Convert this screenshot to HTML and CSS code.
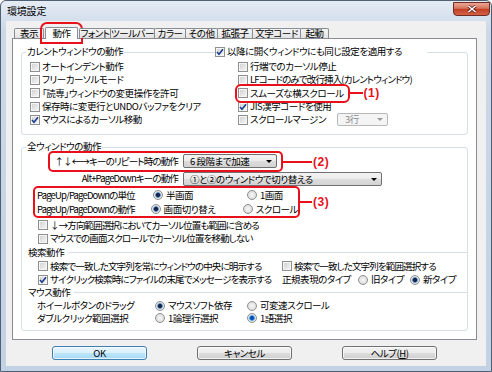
FILE: index.html
```html
<!DOCTYPE html>
<html lang="ja">
<head>
    <meta charset="UTF-8">
    <title>環境設定</title>
    <link rel="stylesheet" href="styles.css">
</head>
<body>

<div class="window">
    <div class="titlebar">
        <span class="title">環境設定</span>
        <span class="close">
            <svg width="10" height="8" viewBox="0 0 10 8"><path d="M1.5 1 L8.5 7 M8.5 1 L1.5 7" stroke="#5a1a10" stroke-width="3"/><path d="M1.5 1 L8.5 7 M8.5 1 L1.5 7" stroke="#fff" stroke-width="1.6"/></svg>
        </span>
    </div>

    <div class="client">
        <div class="tabs">
            <span class="tab t1">表示</span>
            <span class="tab active t2">動作</span>
            <span class="tab t3">フォント</span>
            <span class="tab t4">ツールバー</span>
            <span class="tab t5">カラー</span>
            <span class="tab t6">その他</span>
            <span class="tab t7">拡張子</span>
            <span class="tab t8">文字コード</span>
            <span class="tab t9">起動</span>
        </div>

        <div class="panel">
            <!-- カレントウィンドウ -->
            <div class="group g1">
                <div class="group-head">
                    <span class="caption">カレントウィンドウの動作</span>
                    <label class="check head-check"><i class="box"><svg width="8" height="8" viewBox="0 0 8 8"><path d="M1 4 L3 6.3 L7 1.2" fill="none" stroke="#1d3f91" stroke-width="1.6"/></svg></i><span>以降に開くウィンドウにも同じ設定を適用する</span></label>
                </div>
                <div class="rows">
                    <label class="check"><i class="box"></i><span>オートインデント動作</span></label>
                    <label class="check"><i class="box"></i><span>行端でのカーソル停止</span></label>
                    <label class="check"><i class="box"></i><span>フリーカーソルモード</span></label>
                    <label class="check"><i class="box"></i><span class="tight">LFコードのみで改行挿入(カレントウィンドウ)</span></label>
                    <label class="check"><i class="box"></i><span>「読専」ウィンドウの変更操作を許可</span></label>
                    <div class="cell">
                        <label class="check mark m1"><i class="box"></i><span>スムーズな横スクロール</span><span class="callout c1">(1)</span></label>
                    </div>
                    <label class="check"><i class="box"></i><span>保存時に変更行とUNDOバッファをクリア</span></label>
                    <label class="check"><i class="box"><svg width="8" height="8" viewBox="0 0 8 8"><path d="M1 4 L3 6.3 L7 1.2" fill="none" stroke="#1d3f91" stroke-width="1.6"/></svg></i><span>JIS漢字コードを使用</span></label>
                    <label class="check"><i class="box"><svg width="8" height="8" viewBox="0 0 8 8"><path d="M1 4 L3 6.3 L7 1.2" fill="none" stroke="#1d3f91" stroke-width="1.6"/></svg></i><span>マウスによるカーソル移動</span></label>
                    <div class="cell">
                        <label class="check margin-check"><i class="box"></i><span>スクロールマージン</span></label>
                        <span class="combo off small"><span>3行</span><svg width="6" height="3" viewBox="0 0 6 3"><path d="M0 0h6l-3 3z" fill="#9a9a9a"/></svg></span>
                    </div>
                </div>
            </div>

            <!-- 全ウィンドウ -->
            <div class="group g2">
                <div class="group-head">
                    <span class="caption">全ウィンドウの動作</span>
                </div>

                <div class="combo-row first">
                    <div class="mark m2">
                        <span class="tight">↑↓←→キーのリピート時の動作</span>
                        <span class="combo repeat"><span>6 段階まで加速</span><svg width="6" height="3" viewBox="0 0 6 3"><path d="M0 0h6l-3 3z" fill="#000"/></svg></span>
                        <span class="callout c2">(2)</span>
                    </div>
                </div>

                <div class="combo-row second">
                    <span class="combo-label tight">Alt+PageDownキーの動作</span>
                    <span class="combo switch"><span>①と②のウィンドウで切り替える</span><svg width="6" height="3" viewBox="0 0 6 3"><path d="M0 0h6l-3 3z" fill="#000"/></svg></span>
                </div>

                <div class="mark m3">
                    <div class="radio-row">
                        <span class="radio-label tight">PageUp/PageDownの単位</span>
                        <label class="opt o1"><i class="radio on"></i><span>半画面</span></label>
                        <label class="opt"><i class="radio"></i><span>1画面</span></label>
                    </div>
                    <div class="radio-row">
                        <span class="radio-label tight">PageUp/PageDownの動作</span>
                        <label class="opt o1"><i class="radio on"></i><span>画面切り替え</span></label>
                        <label class="opt"><i class="radio"></i><span>スクロール</span></label>
                    </div>
                    <span class="callout c3">(3)</span>
                </div>

                <label class="check line"><i class="box"></i><span class="tight">↓→方向範囲選択においてカーソル位置も範囲に含める</span></label>
                <label class="check line"><i class="box"></i><span class="tight">マウスでの画面スクロールでカーソル位置を移動しない</span></label>

                <div class="sep">検索動作</div>
                <div class="search-row">
                    <label class="check"><i class="box"></i><span class="tight">検索で一致した文字列を常にウィンドウの中央に明示する</span></label>
                    <label class="check"><i class="box"></i><span class="tight">検索で一致した文字列を範囲選択する</span></label>
                </div>
                <div class="search-row">
                    <label class="check"><i class="box"><svg width="8" height="8" viewBox="0 0 8 8"><path d="M1 4 L3 6.3 L7 1.2" fill="none" stroke="#1d3f91" stroke-width="1.6"/></svg></i><span class="tight">サイクリック検索時にファイルの末尾でメッセージを表示する</span></label>
                    <div class="regex">
                        <span class="regex-label">正規表現のタイプ</span>
                        <label class="opt o-old"><i class="radio"></i><span>旧タイプ</span></label>
                        <label class="opt"><i class="radio on"></i><span>新タイプ</span></label>
                    </div>
                </div>

                <div class="sep mouse">マウス動作</div>
                <div class="radio-row low">
                    <span class="radio-label">ホイールボタンのドラッグ</span>
                    <label class="opt o1"><i class="radio on"></i><span>マウスソフト依存</span></label>
                    <label class="opt"><i class="radio"></i><span>可変速スクロール</span></label>
                </div>
                <div class="radio-row low">
                    <span class="radio-label">ダブルクリック範囲選択</span>
                    <label class="opt o1"><i class="radio"></i><span>1論理行選択</span></label>
                    <label class="opt"><i class="radio on blue"></i><span>1語選択</span></label>
                </div>
            </div>
        </div>

        <div class="buttons">
            <button class="btn default">OK</button>
            <button class="btn">キャンセル</button>
            <button class="btn">ヘルプ(<u>H</u>)</button>
        </div>
    </div>
</div>

</body>
</html>
```

FILE: styles.css
```css
body {
    margin: 0;
    font-family: "Noto Sans CJK JP", sans-serif;
    font-size: 9.5px;
    line-height: 13px;
    color: #000;
    font-feature-settings: "palt";
    letter-spacing: -0.45px;
}

.tight {
    letter-spacing: -0.85px;
}

.window {
    width: 492px;
    height: 372px;
    box-sizing: border-box;
    border: 1px solid #4f5f74;
    border-radius: 6px 6px 0 0;
    background: linear-gradient(#e5ecf5, #cbd8e8 30px, #c2d2e4);
    padding: 0 5px 5px;
    display: flex;
    flex-direction: column;
}

.titlebar {
    height: 20px;
    display: flex;
    align-items: flex-start;
    flex: none;
}

.title {
    padding: 4px 0 0 1px;
    line-height: 12px;
    font-size: 10px;
    letter-spacing: -0.2px;
}

.close {
    margin: 1px -4px 0 auto;
    width: 37px;
    height: 14px;
    box-sizing: border-box;
    border: 1px solid #6f2c22;
    border-radius: 0 0 4px 4px;
    background: linear-gradient(#eba795, #d7735c 45%, #c23d22 50%, #d4624a);
    display: flex;
    align-items: center;
    justify-content: center;
}

.client {
    flex: 1;
    background: #f0f0f0;
    padding: 6px 9px 0 6px;
    box-sizing: border-box;
}

/* tabs */
.tabs {
    display: flex;
    align-items: flex-end;
    height: 11px;
    padding-left: 3px;
    position: relative;
    z-index: 1;
}

.tab {
    height: 10px;
    box-sizing: border-box;
    border: 1px solid #898c95;
    border-bottom: 0;
    border-radius: 2px 2px 0 0;
    background: linear-gradient(#f5f5f5, #e2e2e2);
    text-align: center;
    line-height: 9px;
    margin-left: -1px;
    white-space: nowrap;
}

.tab.active {
    height: 12px;
    margin: 0 2px -1px 1px;
    background: #fff;
    line-height: 11px;
    outline: 2px solid #e8101a;
    outline-offset: 3px;
}

.t1 { width: 30px; }
.t2 { width: 33px; }
.t3 { width: 32px; }
.t4 { width: 45px; }
.t5 { width: 32px; }
.t6 { width: 33px; }
.t7 { width: 36px; }
.t8 { width: 49px; }
.t9 { width: 29px; }

.panel {
    height: 302px;
    box-sizing: border-box;
    border: 1px solid #898c95;
    background: #fff;
    padding-top: 13px;
}

/* group boxes */
.group {
    border: 1px solid #d5dfe5;
    border-radius: 3px;
    margin: 0 8px;
}

.group-head {
    height: 13px;
    margin-top: -8px;
    display: flex;
}

.caption {
    background: #fff;
    padding: 0 1px;
}

.g1 {
    padding: 0 0 8px 8px;
}

.g1 .group-head {
    display: grid;
    grid-template-columns: 189px 212px;
    margin-left: -4px;
}

.g1 .caption {
    justify-self: start;
}

.head-check {
    background: #fff;
}

.rows {
    display: grid;
    grid-template-columns: 208px 1fr;
    grid-auto-rows: 13.3px;
    margin-top: 2px;
}

.cell {
    display: flex;
    align-items: center;
}

.margin-check {
    width: 99px;
}

/* controls */
.check {
    display: flex;
    align-items: center;
    gap: 2px;
    white-space: nowrap;
}

.box {
    width: 10px;
    height: 10px;
    box-sizing: border-box;
    border: 1px solid #8e8f8f;
    background: linear-gradient(135deg, #cfcfcf, #f8f8f8);
    box-shadow: inset 0 0 0 1px #f6f6f6;
    flex: none;
    display: flex;
    align-items: center;
    justify-content: center;
}

.opt {
    display: flex;
    align-items: center;
    gap: 3px;
    white-space: nowrap;
}

.radio {
    width: 10px;
    height: 10px;
    box-sizing: border-box;
    border-radius: 50%;
    border: 1px solid #8e8f8f;
    background: radial-gradient(circle, #f7f7f7, #d4d4d4);
    flex: none;
}

.radio.on {
    background: radial-gradient(circle, #16264a 0 1.6px, #4d86c8 2.4px, #e8e8e8 3.2px, #d2d2d2 100%);
}

.radio.on.blue {
    background: radial-gradient(circle, #0b4fb8 0 1.6px, #5fb0f0 2.6px, #e8e8e8 3.3px, #d2d2d2 100%);
}

.combo {
    height: 14px;
    box-sizing: border-box;
    border: 1px solid #707070;
    border-radius: 2px;
    background: linear-gradient(#f3f3f3 0, #ebebeb 50%, #dddddd 50%, #d3d3d3);
    display: flex;
    align-items: center;
    justify-content: space-between;
    padding: 0 4px 0 6px;
    white-space: nowrap;
    flex: none;
}

.combo.off {
    height: 13px;
    width: 51px;
    border-color: #b5b9bc;
    background: #f4f4f4;
    color: #8a8a8a;
    padding-left: 7px;
}

.repeat { width: 94px; }
.switch { width: 199px; }

/* red annotation boxes */
.mark {
    outline: 2px solid #e8101a;
    border-radius: 3px;
    position: relative;
}

.callout {
    position: absolute;
    left: calc(100% + 2px);
    top: 50%;
    transform: translateY(-50%);
    display: flex;
    align-items: center;
    color: #e8101a;
    font: bold 12px "Liberation Sans", sans-serif;
    letter-spacing: 0.5px;
}

.callout::before {
    content: '';
    height: 2px;
    background: #e8101a;
    margin-right: 1px;
}

.c1::before { width: 14px; }
.c2::before { width: 29px; }
.c3::before { width: 12px; }

.m1 {
    outline-offset: 1px;
    padding-right: 3px;
}

/* 全ウィンドウの動作 */
.g2 {
    margin-top: 12px;
    padding: 0 0 6px 6px;
}

.g2 .caption {
    margin-left: -2px;
}

.combo-row {
    display: flex;
}

.combo-row.first {
    width: 253px;
    justify-content: flex-end;
}

.m2 {
    display: flex;
    align-items: center;
    gap: 5px;
    padding: 1px 4px 2px;
}

.combo-row.second {
    margin-top: 2px;
}

.combo-label {
    width: 155px;
    box-sizing: border-box;
    padding-right: 5px;
    text-align: right;
    white-space: nowrap;
}

.m3 {
    width: 263px;
    box-sizing: border-box;
    margin: 2px 0 0 7px;
    padding-left: 2px;
}

.radio-row {
    display: flex;
    align-items: center;
    height: 14px;
}

.m3 .radio-label {
    width: 116px;
}

.m3 .o1 {
    width: 94px;
}

.radio-label {
    white-space: nowrap;
}

.radio-row.low {
    height: 12.5px;
    padding-left: 9px;
}

.low .radio-label {
    width: 118px;
}

.low .o1 {
    width: 92px;
}

.check.line {
    height: 13.5px;
    padding-left: 10px;
}

.check.line:first-of-type {
    margin-top: 2px;
}

.sep {
    display: flex;
    align-items: center;
    gap: 4px;
    height: 14px;
    white-space: nowrap;
}

.sep::after {
    content: '';
    flex: 1;
    border-top: 1px solid #d5dfe5;
}

.sep.mouse {
    height: 13px;
}

.search-row {
    display: grid;
    grid-template-columns: 254px 1fr;
    height: 13.5px;
    align-items: center;
}

.search-row > .check:first-child {
    padding-left: 10px;
}

.regex {
    display: flex;
    align-items: center;
}

.regex-label {
    width: 76px;
    white-space: nowrap;
}

.o-old {
    width: 52px;
}

/* buttons */
.buttons {
    display: flex;
    justify-content: center;
    gap: 50px;
    margin-top: 6px;
}

.btn {
    width: 95px;
    height: 14px;
    box-sizing: border-box;
    border: 1px solid #707070;
    border-radius: 3px;
    background: linear-gradient(#f2f2f2 0, #ebebeb 50%, #dddddd 50%, #cfcfcf);
    box-shadow: inset 0 0 0 1px rgba(255, 255, 255, 0.7);
    font: inherit;
    letter-spacing: inherit;
    line-height: 12px;
    padding: 0;
    color: #000;
}

.btn.default {
    border-color: #3c7fb1;
    background: linear-gradient(#eaf6fd 0, #d9f0fc 50%, #bee6fd 50%, #a7d9f5);
}

.btn u {
    text-decoration-thickness: 1px;
}
```
